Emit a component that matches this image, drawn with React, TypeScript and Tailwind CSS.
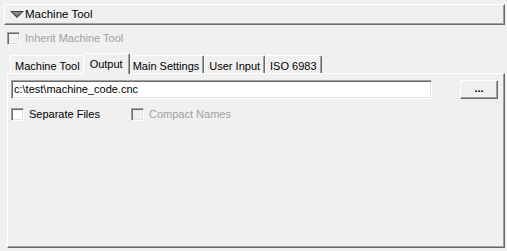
import React from 'react'

const font = { fontFamily: '"Liberation Sans", Arial, sans-serif' }

function CheckBox({ label, disabled }: { label: string; disabled?: boolean }) {
  return (
    <div className="flex items-center gap-[5px]">
      <div
        className={`h-[13px] w-[13px] border-t border-l border-b border-r border-t-[#a0a0a0] border-l-[#a0a0a0] border-b-white border-r-white shadow-[inset_1px_1px_0_#696969,inset_-1px_-1px_0_#e3e3e3] ${
          disabled ? 'bg-[#f0f0f0]' : 'bg-white'
        }`}
      />
      <span className={`text-[11px] leading-[13px] ${disabled ? 'text-[#a0a0a0]' : 'text-black'}`}>{label}</span>
    </div>
  )
}

const tabs = ['Machine Tool', 'Output', 'Main Settings', 'User Input', 'ISO 6983']

export default function App() {
  return (
    <div className="w-[507px] h-[251px] bg-[#f0f0f0] pt-[4px] overflow-hidden" style={font}>
      {/* header bar */}
      <div className="ml-[4px] w-[501px] h-[21px] flex items-center border-t border-l border-r border-b border-t-white border-l-white border-r-[#696969] border-b-[#696969] shadow-[inset_-1px_-1px_0_#a0a0a0]">
        <svg width="14" height="8" viewBox="0 0 14 8" className="ml-[5px]">
          <polygon points="0,0 14,0 7,7" fill="#404040" />
          <polygon points="2,1 12,1 7,5" fill="#8a8a8a" />
        </svg>
        <span className="ml-px text-[11.5px] leading-none text-black">Machine Tool</span>
      </div>

      {/* inherit */}
      <div className="ml-[7px] mt-[7px]">
        <CheckBox label="Inherit Machine Tool" disabled />
      </div>

      {/* tabs */}
      <div className="ml-[10px] mt-[8px] flex items-end h-[20px]">
        {tabs.map((t) => {
          const sel = t === 'Output'
          return (
            <div
              key={t}
              className={`flex items-start justify-center border-t border-l border-r border-t-white border-l-white border-r-[#696969] shadow-[inset_-1px_0_0_#a0a0a0] rounded-t-[2px] text-[11px] text-black bg-[#f0f0f0] ${
                sel ? 'relative z-10 h-[21px] -mx-[2px] px-[6px] pt-[2px] -mb-px' : 'h-[18px] px-[4px] pt-[2px]'
              }`}
            >
              {t}
            </div>
          )
        })}
      </div>

      {/* panel */}
      <div className="ml-[7px] w-[498px] h-[175px] border-t border-l border-r border-b border-t-white border-l-white border-r-[#696969] border-b-[#696969] shadow-[inset_-1px_-1px_0_#a0a0a0] px-[3px] pt-[6px]">
        <div className="flex items-center">
          <div className="w-[421px] h-[19px] bg-white border-t border-l border-b border-r border-t-[#a0a0a0] border-l-[#a0a0a0] border-b-white border-r-white shadow-[inset_1px_1px_0_#696969,inset_-1px_-1px_0_#e3e3e3] flex items-center pl-[2px] text-[11px] text-black">
            c:\test\machine_code.cnc
          </div>
          <div className="ml-[28px] w-[38px] h-[19px] flex items-center justify-center border-t border-l border-r border-b border-t-white border-l-white border-r-[#696969] border-b-[#696969] shadow-[inset_-1px_-1px_0_#a0a0a0] text-[11px] font-bold leading-none text-black pb-[2px]">
            ...
          </div>
        </div>
        <div className="flex items-center mt-[9px]">
          <div className="w-[120px]">
            <CheckBox label="Separate Files" />
          </div>
          <CheckBox label="Compact Names" disabled />
        </div>
      </div>
    </div>
  )
}
